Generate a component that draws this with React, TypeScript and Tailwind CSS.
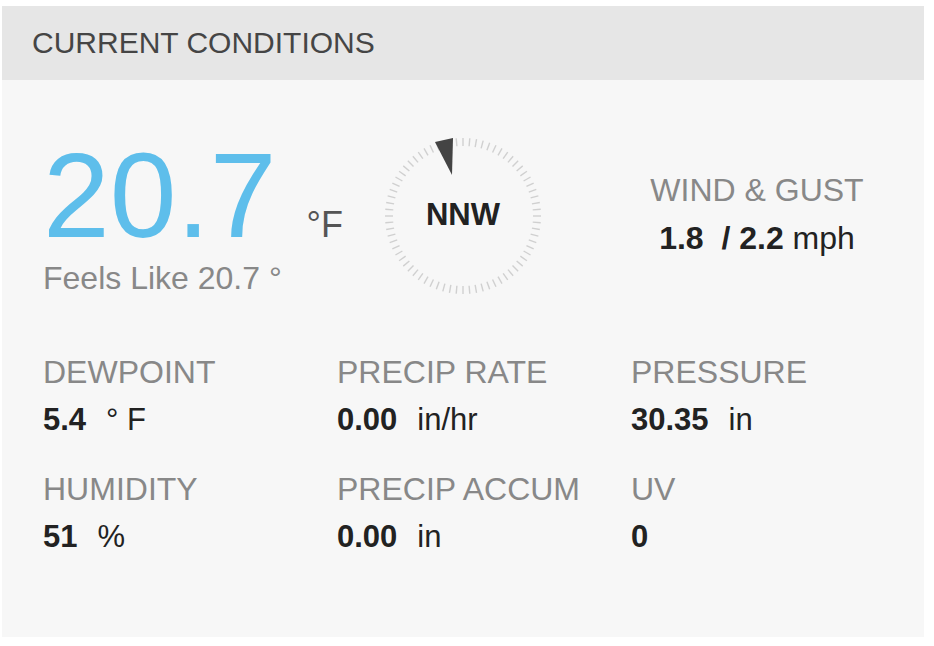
const FONT = { fontFamily: '"Liberation Sans", Arial, Helvetica, sans-serif' };

function Compass() {
  const ticks = Array.from({ length: 72 }, (_, i) => i * 5);
  return (
    <svg width="160" height="160" viewBox="0 0 160 160" className="mt-[1px] shrink-0">
      {ticks.map((deg) => {
        const a = (deg * Math.PI) / 180;
        const x1 = 80 + Math.sin(a) * 70;
        const y1 = 80 - Math.cos(a) * 70;
        const x2 = 80 + Math.sin(a) * 78;
        const y2 = 80 - Math.cos(a) * 78;
        return <line key={deg} x1={x1} y1={y1} x2={x2} y2={y2} stroke="#d0d0d0" strokeWidth="1.4" />;
      })}
      <polygon points="52,6 70,2 69,39" fill="#444444" />
      <text
        x="80"
        y="89"
        textAnchor="middle"
        fontFamily='"Liberation Sans", Arial, sans-serif'
        fontWeight="700"
        fontSize="31"
        fill="#222222"
      >
        NNW
      </text>
    </svg>
  );
}

function Stat({ label, value, unit }: { label: string; value: string; unit?: string }) {
  return (
    <div className="flex flex-col">
      <div className="text-[32px] leading-[32px] text-[#888888]">{label}</div>
      <div className="mt-[16px] text-[31px] leading-[31px] text-[#222222] whitespace-pre">
        <span className="font-bold">{value}</span>
        {unit && <span className="ml-[20px]">{unit}</span>}
      </div>
    </div>
  );
}

export default function App() {
  return (
    <div className="min-h-screen bg-white pt-[6px] pl-[2px]" style={FONT}>
      <div className="w-[922px] h-[631px] flex flex-col bg-[#f7f7f7]">
        <div className="h-[74px] bg-[#e6e6e6] flex items-center pl-[30px]">
          <span className="text-[30px] leading-none text-[#454545]">CURRENT CONDITIONS</span>
        </div>

        <div className="flex-1 pl-[41px] pt-[55px]">
          <div className="flex items-start">
            <div className="w-[340px] shrink-0 flex flex-col">
              <div className="flex items-baseline">
                <span className="text-[120px] leading-[120px] text-[#5ebeeb]">20.7</span>
                <span className="ml-[30px] text-[36px] leading-none text-[#555555]">°F</span>
              </div>
              <div className="mt-[7px] text-[32px] leading-[32px] text-[#888888]">Feels Like 20.7 °</div>
            </div>

            <Compass />

            <div className="ml-[50px] w-[328px] mt-[39px] flex flex-col items-center">
              <div className="text-[32px] leading-[32px] text-[#888888]">WIND &amp; GUST</div>
              <div className="mt-[17px] text-[32px] leading-[31px] text-[#222222] whitespace-pre">
                <span className="font-bold">1.8  / 2.2</span> mph
              </div>
            </div>
          </div>

          <div className="mt-[60px] grid grid-cols-[294px_294px_294px] gap-y-[38px]">
            <Stat label="DEWPOINT" value="5.4" unit="° F" />
            <Stat label="PRECIP RATE" value="0.00" unit="in/hr" />
            <Stat label="PRESSURE" value="30.35" unit="in" />
            <Stat label="HUMIDITY" value="51" unit="%" />
            <Stat label="PRECIP ACCUM" value="0.00" unit="in" />
            <Stat label="UV" value="0" />
          </div>
        </div>
      </div>
    </div>
  );
}
